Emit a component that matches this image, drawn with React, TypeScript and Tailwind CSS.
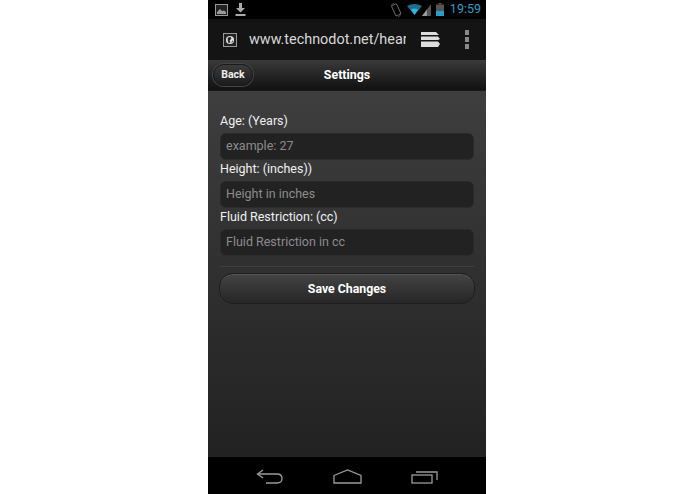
export default function App() {
  return (
    <div className="w-[695px] h-[494px] bg-white pl-[208px] font-['Roboto',sans-serif]">
      <div className="w-[278px] h-[494px] flex flex-col bg-black overflow-hidden">
        {/* status bar */}
        <div className="h-[19px] shrink-0 bg-black flex items-center pl-[7px] pr-[5px]">
          <svg width="14" height="12" viewBox="0 0 14 12" className="mr-[6px]">
            <rect x="0.5" y="0.5" width="12" height="11" fill="#222" stroke="#999" />
            <path d="M2 10 L2 8 L5 5 L7 7 L9 6.5 L11 8 L11 10 Z" fill="#999" />
          </svg>
          <svg width="11" height="14" viewBox="0 0 11 14">
            <path d="M4 0 H7 V5 H10 L5.5 9.5 L1 5 H4 Z" fill="#aaa" />
            <rect x="0.5" y="11" width="10" height="2" fill="#aaa" />
          </svg>
          <div className="flex-1" />
          <svg width="12" height="14" viewBox="0 0 12 14" className="mr-[5px]">
            <rect x="3.5" y="1.5" width="5.5" height="11" rx="1" transform="rotate(-25 6 7)" fill="none" stroke="#666" />
            <path d="M1 3 Q2 1 4 0 M11 11 Q10 13 8 14" fill="none" stroke="#555" />
          </svg>
          <svg width="15" height="11" viewBox="0 0 15 11">
            <path d="M0 2 Q7.5 -2 15 2 L7.5 11 Z" fill="#1d6f8f" />
            <path d="M4 5.5 Q7.5 3.5 11 5.5 L7.5 11 Z" fill="#33b5e5" />
          </svg>
          <svg width="9" height="12" viewBox="0 0 9 12" className="mr-[5px]">
            <path d="M0 12 L9 0 V12 Z" fill="#555" />
            <path d="M0 12 L5 5.5 V12 Z" fill="#999" />
          </svg>
          <svg width="8" height="13" viewBox="0 0 8 13" className="mr-[6px]">
            <rect x="2.5" y="0" width="3" height="1.5" fill="#555" />
            <rect x="0" y="1.5" width="8" height="11.5" fill="#555" />
            <rect x="0" y="8" width="8" height="5" fill="#2a9cc7" />
          </svg>
          <span className="text-[12.5px] leading-none text-[#2f9fc9] font-['Roboto',sans-serif]">19:59</span>
        </div>
        {/* browser bar */}
        <div className="h-[41px] shrink-0 bg-[#141414] flex items-center pl-[15px]">
          <div className="w-[14px] h-[14px] border border-[#999] bg-[#222] flex items-center justify-center shrink-0">
            <svg width="10" height="10" viewBox="0 0 11 11">
              <circle cx="5.5" cy="5.5" r="4.5" fill="#ddd" />
              <path d="M3 3 L6 2 L7 4 L5 6 L6 8 L4 9 L3 6 Z M8 6 L9 7 L7 9 Z" fill="#222" />
            </svg>
          </div>
          <div className="w-[157px] ml-[12px] pt-[1px] overflow-hidden whitespace-nowrap text-[14.4px] leading-none text-[#d8d8d8] font-['Roboto',sans-serif] shrink-0">
            www.technodot.net/heart
          </div>
          <svg width="19" height="15" viewBox="0 0 19 15" className="ml-[15px] shrink-0">
            <path d="M0 0 H15 L18 3 H0 Z M0 4.5 H17 L19 7 L17 8 H0 Z M0 9.5 H17 L19 12 L17 15 H0 Z" fill="#ddd" />
          </svg>
          <div className="ml-[25px] flex flex-col gap-[2px] shrink-0">
            <div className="w-[4px] h-[5px] bg-[#8a8a8a]" />
            <div className="w-[4px] h-[5px] bg-[#8a8a8a]" />
            <div className="w-[4px] h-[5px] bg-[#8a8a8a]" />
          </div>
        </div>
        {/* header */}
        <div className="relative h-[31px] shrink-0 bg-gradient-to-b from-[#3a3a3a] to-[#111] flex items-center justify-center border-b border-[#1a1a1a]">
          <div className="absolute left-[5px] top-[4px] w-[40px] h-[22px] rounded-full border border-[#1a1a1a] shadow-[0_0_0_1px_#444] bg-gradient-to-b from-[#3c3c3c] to-[#1c1c1c] flex items-center justify-center text-[10.5px] font-bold text-[#eee]">
            Back
          </div>
          <span className="text-[12.4px] font-bold text-white">Settings</span>
        </div>
        {/* content */}
        <div className="flex-1 bg-gradient-to-b from-[#3e3e3e] to-[#222] px-[12px] pt-[21px]">
          <div className="text-[12.5px] leading-[17px] h-[21px] text-[#f0f0f0]">Age: (Years)</div>
          <div className="h-[27px] rounded-[6px] bg-[#222] border border-[#2a2a2a] pl-[5px] flex items-center text-[12.5px] text-[#8c8c8c]">example: 27</div>
          <div className="text-[12.5px] leading-[17px] h-[21px] text-[#f0f0f0]">Height: (inches))</div>
          <div className="h-[27px] rounded-[6px] bg-[#222] border border-[#2a2a2a] pl-[5px] flex items-center text-[12.5px] text-[#8c8c8c]">Height in inches</div>
          <div className="text-[12.5px] leading-[17px] h-[21px] text-[#f0f0f0]">Fluid Restriction: (cc)</div>
          <div className="h-[27px] rounded-[6px] bg-[#222] border border-[#2a2a2a] pl-[5px] flex items-center text-[12.5px] text-[#8c8c8c]">Fluid Restriction in cc</div>
          <div className="h-px bg-[#3f3f3f] mt-[10px] mb-[7px]" />
          <div className="h-[31px] -mt-px -mx-px pt-[2px] rounded-[14px] border border-[#1e1e1e] shadow-[inset_0_1px_0_#555] bg-gradient-to-b from-[#444] to-[#262626] flex items-center justify-center text-[12.3px] font-bold text-white">
            Save Changes
          </div>
        </div>
        {/* nav */}
        <div className="h-[37px] shrink-0 bg-black flex items-center pl-[48px] pt-[2px]">
          <svg width="27" height="16" viewBox="0 0 27 16" fill="none" stroke="#9a9a9a" strokeWidth="1.3">
            <path d="M7 1 L1.5 5 L7 9" />
            <path d="M1.5 5 H21 Q26 5 26 9.5 Q26 14 21 14 H10" />
          </svg>
          <svg width="29" height="15" viewBox="0 0 29 15" fill="none" stroke="#9a9a9a" strokeWidth="1.3" className="ml-[50px]">
            <path d="M1 6.5 L14.5 1 L28 6.5 V14 H1 Z" />
          </svg>
          <svg width="27" height="15" viewBox="0 0 27 15" fill="none" stroke="#9a9a9a" strokeWidth="1.3" className="ml-[49px]">
            <rect x="1" y="6" width="20" height="8" />
            <path d="M5 3 H26 V11" />
          </svg>
        </div>
      </div>
    </div>
  );
}
